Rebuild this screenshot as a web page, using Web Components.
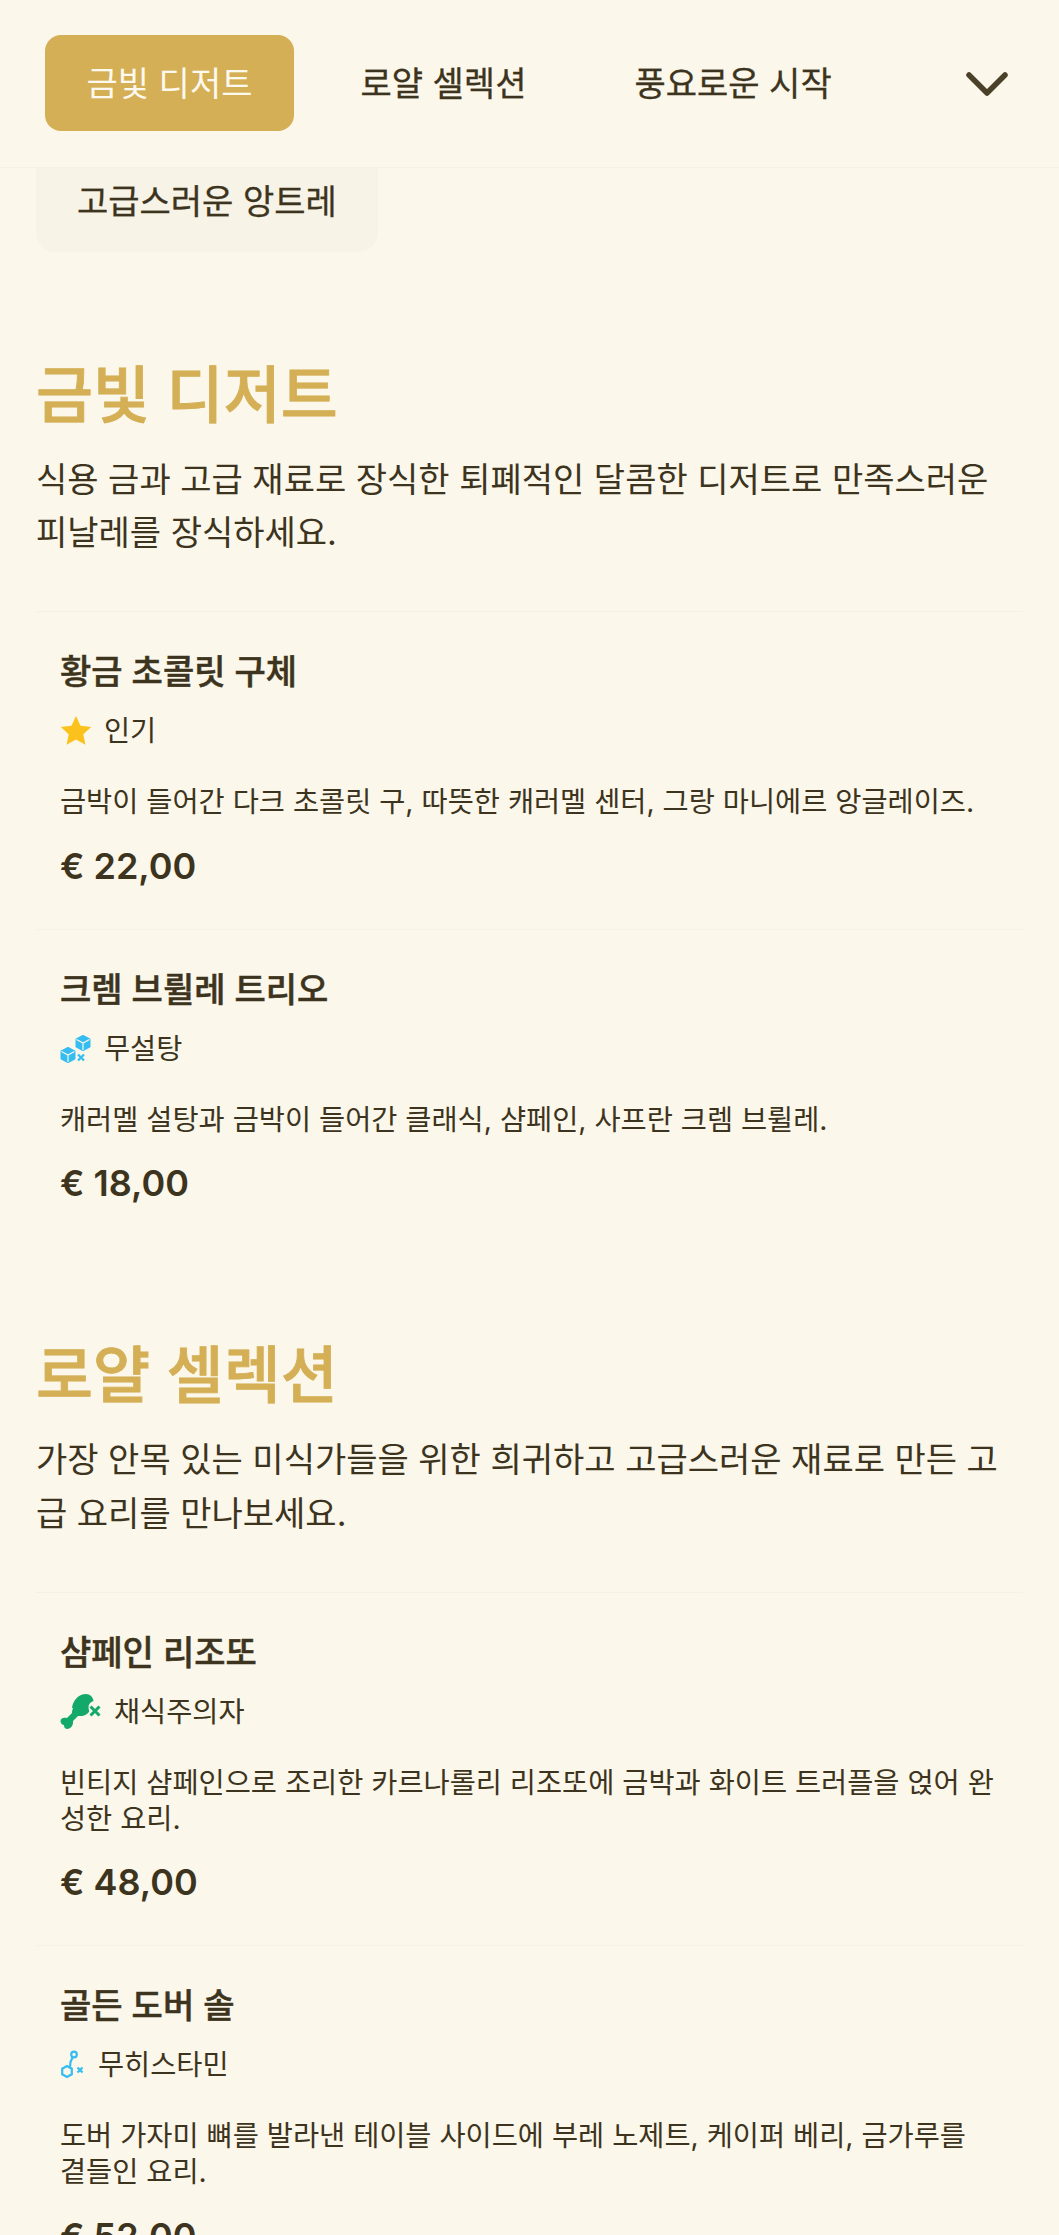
<!DOCTYPE html>
<html lang="ko">
<head>
<meta charset="utf-8">
<title>메뉴</title>
<style>
  html, body { margin: 0; padding: 0; background: #fbf7ea; }
  body {
    font-family: Inter, "Noto Sans CJK KR", sans-serif;
    color: #3d3420;
    height: 2235px;
    overflow: hidden;
  }
</style>
</head>
<body>
<menu-header>
  <menu-tab active>금빛 디저트</menu-tab>
  <menu-tab>로얄 셀렉션</menu-tab>
  <menu-tab>풍요로운 시작</menu-tab>
</menu-header>
<menu-chip>고급스러운 앙트레</menu-chip>

<menu-section heading="금빛 디저트" intro="식용 금과 고급 재료로 장식한 퇴폐적인 달콤한 디저트로 만족스러운 피날레를 장식하세요.">
  <menu-item name="황금 초콜릿 구체" price="€ 22,00" description="금박이 들어간 다크 초콜릿 구, 따뜻한 캐러멜 센터, 그랑 마니에르 앙글레이즈.">
    <diet-tag icon="star">인기</diet-tag>
  </menu-item>
  <menu-item name="크렘 브륄레 트리오" price="€ 18,00" description="캐러멜 설탕과 금박이 들어간 클래식, 샴페인, 사프란 크렘 브륄레.">
    <diet-tag icon="sugar">무설탕</diet-tag>
  </menu-item>
</menu-section>

<menu-section heading="로얄 셀렉션" intro="가장 안목 있는 미식가들을 위한 희귀하고 고급스러운 재료로 만든 고급 요리를 만나보세요.">
  <menu-item name="샴페인 리조또" price="€ 48,00" description="빈티지 샴페인으로 조리한 카르나롤리 리조또에 금박과 화이트 트러플을 얹어 완성한 요리.">
    <diet-tag icon="meat">채식주의자</diet-tag>
  </menu-item>
  <menu-item name="골든 도버 솔" price="€ 52,00" description="도버 가자미 뼈를 발라낸 테이블 사이드에 부레 노제트, 케이퍼 베리, 금가루를 곁들인 요리.">
    <diet-tag icon="histamine">무히스타민</diet-tag>
  </menu-item>
</menu-section>

<script>
// Tab bar at the top of the menu
class MenuHeader extends HTMLElement {
  constructor() {
    super();
    this.attachShadow({ mode: 'open' });
    this.shadowRoot.innerHTML = `
      <style>
        :host {
          display: flex;
          align-items: center;
          height: 168px;
          box-sizing: border-box;
          padding: 0 45px 0 45px;
          border-bottom: 1px solid #f6f1e3;
        }
        .tabs { display: flex; gap: 25px; flex: 1; align-items: center; margin-top: -1px; }
        svg { width: 44px; height: 28px; display: block; margin-right: 5px; }
      </style>
      <div class="tabs"><slot></slot></div>
      <svg viewBox="0 0 44 28" fill="none" stroke="#4a4128" stroke-width="5.5" stroke-linecap="round" stroke-linejoin="round">
        <path d="M4 5l18 18L40 5"/>
      </svg>`;
  }
}

class MenuTab extends HTMLElement {
  constructor() {
    super();
    this.attachShadow({ mode: 'open' });
    this.shadowRoot.innerHTML = `
      <style>
        :host {
          display: block;
          padding: 0 41.5px;
          height: 96px;
          line-height: 97px;
          font-size: 34px;
          -webkit-text-stroke: 0.3px currentColor;
          border-radius: 16px;
          color: #3d3420;
          white-space: nowrap;
        }
        :host([active]) { background: #d4af55; color: #fdf9ee; -webkit-text-stroke: 0; }
      </style>
      <slot></slot>`;
  }
}

// Wrapped tab showing below the header, its top is cut off by the bar
class MenuChip extends HTMLElement {
  constructor() {
    super();
    this.attachShadow({ mode: 'open' });
    this.shadowRoot.innerHTML = `
      <style>
        :host {
          display: block;
          width: fit-content;
          margin-left: 36px;
          padding: 0 41px;
          height: 84px;
          line-height: 68px;
          font-size: 34px;
          -webkit-text-stroke: 0.3px currentColor;
          background: #f7f3e6;
          border-radius: 0 0 20px 20px;
        }
      </style>
      <slot></slot>`;
  }
}

class MenuSection extends HTMLElement {
  constructor() {
    super();
    this.attachShadow({ mode: 'open' });
    this.shadowRoot.innerHTML = `
      <style>
        :host { display: block; padding: 0 36px; margin-top: 97.5px; }
        :host(:last-of-type) { margin-top: 84px; }
        h2 {
          margin: 0;
          font-size: 62px;
          line-height: 92px;
          font-weight: 500;
          -webkit-text-stroke: 0.8px currentColor;
          color: #d4af55;
        }
        p {
          margin: 11px 0 0;
          font-size: 34px;
          line-height: 53.6px;
        }
        .items { margin-top: 51.5px; }
      </style>
      <h2></h2>
      <p></p>
      <div class="items"><slot></slot></div>`;
    this.shadowRoot.querySelector('h2').textContent = this.getAttribute('heading');
    this.shadowRoot.querySelector('p').textContent = this.getAttribute('intro');
  }
}

class MenuItem extends HTMLElement {
  constructor() {
    super();
    this.attachShadow({ mode: 'open' });
    this.shadowRoot.innerHTML = `
      <style>
        :host {
          display: block;
          padding: 38px 24px 41px;
          border-top: 1px solid #f6f1e3;
        }
        h3 { margin: 0; font-size: 34px; line-height: 44px; font-weight: 500; -webkit-text-stroke: 0.5px currentColor; }
        .tag { margin-top: 17px; }
        p { margin: 33px 0 0; font-size: 28.4px; line-height: 36px; }
        .price { margin-top: 23.5px; font-size: 36px; line-height: 44px; font-weight: 600; }
      </style>
      <h3></h3>
      <div class="tag"><slot></slot></div>
      <p></p>
      <div class="price"></div>`;
    this.shadowRoot.querySelector('h3').textContent = this.getAttribute('name');
    this.shadowRoot.querySelector('p').textContent = this.getAttribute('description');
    this.shadowRoot.querySelector('.price').textContent = this.getAttribute('price');
  }
}

const ICONS = {
  star: `<svg width="32" height="32" viewBox="0 0 32 32"><path fill="#fbc21d" d="M16 1l4.500 9.800 10.700 1.200-7.900 7.200 2.100 10.500L16 24.500 6.600 29.700l2.100-10.500L.8 12l10.700-1.200z"/></svg>`,
  sugar: `<svg width="32" height="32" viewBox="0 0 32 32">
    <g fill="#35bdf2" stroke="#35bdf2" stroke-width="2" stroke-linejoin="round">
      <path d="M8 15l6.500 3.500v7L8 29l-6.500-3.500v-7z"/>
      <path d="M23 3l6.500 3.500v7L23 17l-6.500-3.500v-7z"/>
    </g>
    <g fill="none" stroke="#fbf7ea" stroke-width="1.200">
      <path d="M1.500 18.500L8 22l6.500-3.500M8 22v7M16.500 6.500L23 10l6.500-3.500M23 10v7"/>
    </g>
    <path d="M18 21.500l6 6M24 21.500l-6 6" stroke="#35bdf2" stroke-width="2.200" fill="none"/>
  </svg>`,
  meat: `<svg width="42" height="36" viewBox="0 0 42 36"><path fill="#12a96b" d="M12 14C13 6 19 0 26 0c4 0 7 3 7.500 7-3 1-5 3-5 6 0 2.500 1 4 .5 5-3 3.500-7 4.500-11 4l-5 5c.5 4-2 8-6 8-2.500 0-3-3-3-4-2 0-3.500-2-3.500-4 0-3 3.500-4 6.500-3l5-5c0-2 .5-3.500 1-5z"/><path d="M30.500 12.500l9 9M39.500 12.500l-9 9" stroke="#12a96b" stroke-width="3" fill="none"/></svg>`,
  histamine: `<svg width="26" height="32" viewBox="0 0 26 32" fill="none"><g stroke="#35bdf2" stroke-width="2.200"><path d="M7 17l4.800 2.700v5.600L7 28l-4.800-2.700v-5.600z"/><path d="M10 18.500l.5-5.500 2-4.500"/><circle cx="14" cy="5.500" r="2.800"/></g><path d="M17.500 18.500l5 5M22.500 18.500l-5 5" stroke="#35bdf2" stroke-width="2.200"/></svg>`
};

// Dietary badge: an icon and a label
class DietTag extends HTMLElement {
  constructor() {
    super();
    this.attachShadow({ mode: 'open' });
    this.shadowRoot.innerHTML = `
      <style>
        :host {
          display: flex;
          align-items: center;
          gap: 12px;
          font-size: 28.4px;
          line-height: 40px;
        }
        svg { display: block; flex: none; }
      </style>
      ${ICONS[this.getAttribute('icon')] || ''}
      <span><slot></slot></span>`;
  }
}

customElements.define('menu-header', MenuHeader);
customElements.define('menu-tab', MenuTab);
customElements.define('menu-chip', MenuChip);
customElements.define('menu-section', MenuSection);
customElements.define('menu-item', MenuItem);
customElements.define('diet-tag', DietTag);
</script>
</body>
</html>
